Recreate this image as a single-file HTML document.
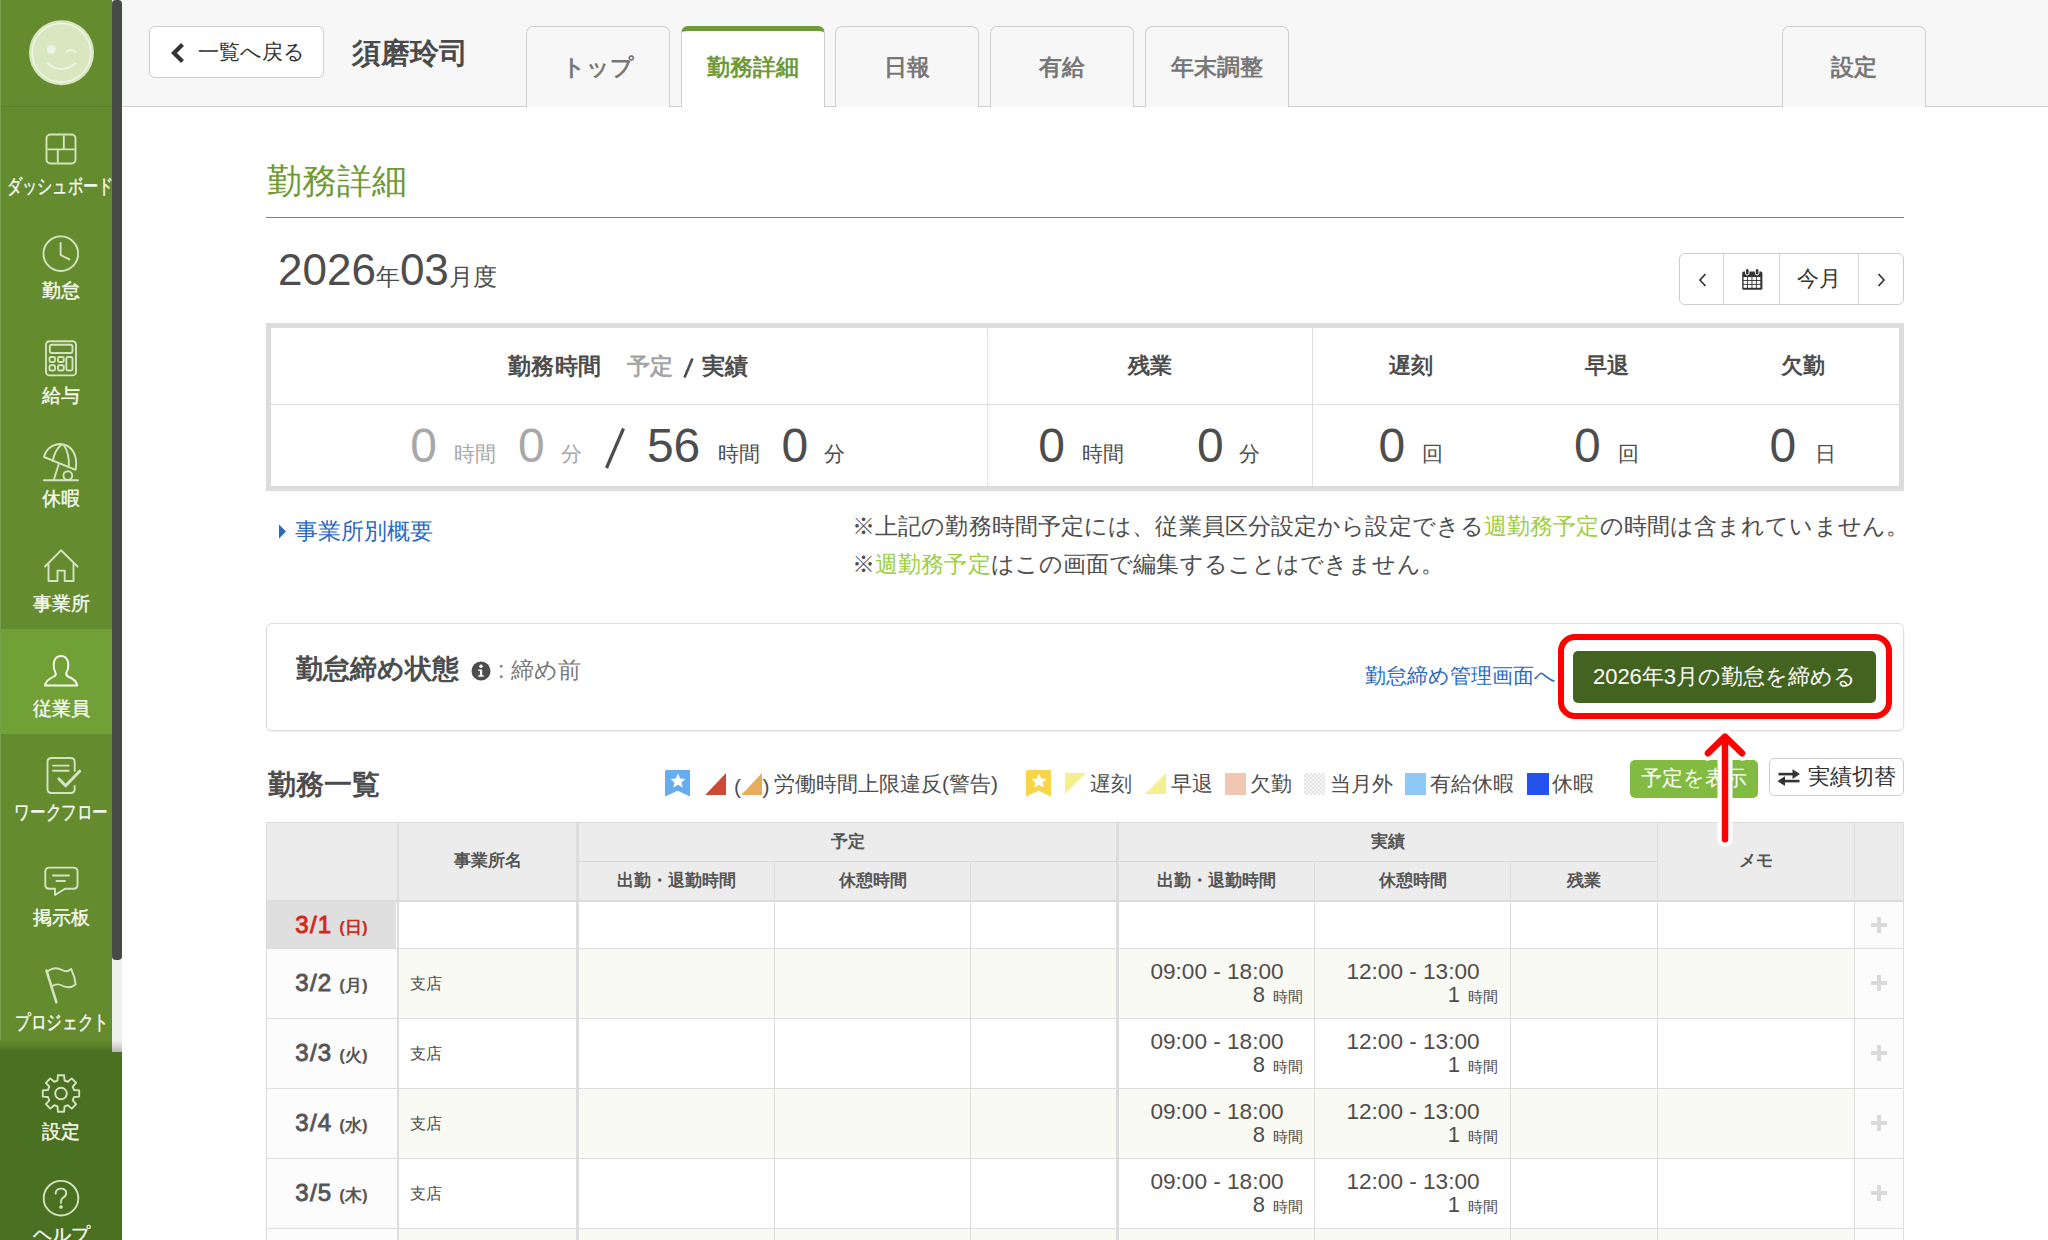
<!DOCTYPE html>
<html lang="ja">
<head>
<meta charset="utf-8">
<style>
*{box-sizing:border-box;margin:0;padding:0}
html,body{width:2048px;height:1240px;overflow:hidden;background:#fff}
body{position:relative;font-family:"Liberation Sans",sans-serif;color:#4d4d4d}
.a{position:absolute}
/* sidebar */
#sb{position:absolute;left:0;top:0;width:122px;height:1240px;background:#648c2e;overflow:hidden}
#sb .logoarea{position:absolute;left:0;top:0;width:112px;height:107px;border-bottom:1px solid #5a8028}
#sb .item{position:absolute;left:0;width:112px;height:105px;color:#fff}
#sb .lbl{position:absolute;left:0;width:122px;text-align:center;font-size:19px;line-height:20px;white-space:nowrap;color:#fbfdf7;-webkit-text-stroke:0.35px #fbfdf7}
#sb .xx{position:absolute;left:0;width:112px;text-align:center;font-size:19px;line-height:20px;white-space:nowrap;color:#fbfdf7}
#sb .item svg{position:absolute;left:0;top:0}
#sb .active{background:#71a036}
#sbtrack{position:absolute;left:112px;top:0;width:10px;height:1052px;background:linear-gradient(#eef0ea 1040px,#d6d6d2 1046px,#b5b5b2 1052px)}
#sbthumb{position:absolute;left:112px;top:0;width:10px;height:960px;background:#474947;border-radius:4px}
#sbbottom{position:absolute;left:0;top:1051px;width:122px;height:189px;background:#4a7121}
#sbshade{position:absolute;left:0;top:1040px;width:112px;height:12px;background:linear-gradient(#648c2e,#5b8129 45%,#4f7424 80%,#456a22)}

#hdr{position:absolute;left:122px;top:0;width:1926px;height:107px;background:#f7f7f7;border-bottom:1px solid #cfcfcf}
.backbtn{position:absolute;left:149px;top:26px;width:175px;height:52px;background:#fff;border:1px solid #cdcdcd;border-radius:6px}
.backbtn span{position:absolute;left:48px;top:13px;font-size:21px;line-height:24px;color:#333;white-space:nowrap}
.pname{position:absolute;left:352px;top:36px;font-size:29px;line-height:34px;font-weight:bold;color:#4a4a4a;white-space:nowrap}
.tab{position:absolute;top:26px;width:144px;height:81px;background:#f7f7f7;border:1px solid #cfcfcf;border-bottom:none;border-radius:7px 7px 0 0;text-align:center;font-size:23px;font-weight:bold;color:#777;line-height:26px;padding-top:27px;white-space:nowrap}
.tab.on{background:#fff;color:#6f9a37;border-top:5px solid #6f9a37;padding-top:23px;height:81px;border-left-color:#cfcfcf}

.ptitle{position:absolute;left:267px;top:159px;font-size:35px;line-height:44px;color:#6f9a37;white-space:nowrap}
.pline{position:absolute;left:266px;top:217px;width:1638px;height:1px;background:#6f9a30}
.month{position:absolute;left:278px;top:246px;white-space:nowrap;color:#4d4d4d;line-height:48px}
.month b{font-weight:normal;font-size:44px}
.month i{font-style:normal;font-size:24px}
.navg{position:absolute;left:1679px;top:253px;width:225px;height:52px;border:1px solid #cdcdcd;border-radius:6px;background:#fff}
.navg .dv{position:absolute;top:0;width:1px;height:50px;background:#d5d5d5}
.sumbox{position:absolute;left:266px;top:323px;width:1638px;height:168px;border:5px solid #dcdcdc;background:#fff}
.sumbox .hd{position:absolute;font-size:22px;font-weight:bold;line-height:26px;color:#4d4d4d;white-space:nowrap;text-align:center}
.num{position:absolute;white-space:nowrap;color:#4d4d4d;line-height:50px}
.num b{font-weight:normal;font-size:48px}
.num i{font-style:normal;font-size:20px;margin-left:6px}

.link{color:#2a69c2}
.lnk1{position:absolute;left:295px;top:517px;font-size:23px;line-height:28px;white-space:nowrap}
.note{position:absolute;left:852px;font-size:23px;letter-spacing:0.11px;line-height:28px;color:#4d4d4d;white-space:nowrap}
.note span{color:#9dcf3e}
.stbox{position:absolute;left:266px;top:623px;width:1638px;height:108px;border:1px solid #dedede;border-radius:6px;background:#fff;box-shadow:0 1px 2px rgba(0,0,0,.08)}
.sttl{position:absolute;left:296px;top:652px;font-size:27.3px;line-height:34px;font-weight:bold;color:#4d4d4d;white-space:nowrap}
.stval{position:absolute;left:498px;top:657px;font-size:23px;line-height:26px;color:#7a7a7a;white-space:nowrap}
.lnk2{position:absolute;left:1365px;top:663px;font-size:21px;line-height:26px;white-space:nowrap}
.closebtn{position:absolute;left:1573px;top:651px;width:303px;height:52px;background:#436320;border-radius:5px;color:#fff;font-size:22px;line-height:52px;text-align:center;white-space:nowrap}
.redbox{position:absolute;left:1558px;top:634px;width:334px;height:85px;border:6px solid #f00;border-radius:17px}

.h2{position:absolute;left:268px;top:768px;font-size:28px;line-height:34px;font-weight:bold;color:#4d4d4d;white-space:nowrap}
.lg{position:absolute;top:771px;font-size:21px;line-height:26px;color:#4d4d4d;white-space:nowrap}
.sq{position:absolute;top:773px;width:21px;height:22px}
.btn-y{position:absolute;left:1630px;top:760px;width:128px;height:38px;background:#82bb42;border-radius:5px;color:#fff;font-size:21px;line-height:36px;text-align:center;white-space:nowrap}
.btn-s{position:absolute;left:1769px;top:758px;width:135px;height:38px;background:#fff;border:1px solid #cdcdcd;border-radius:5px;color:#333;font-size:22px;line-height:36px;white-space:nowrap}
#tbl{position:absolute;left:266px;top:822px;width:1638px;height:420px;overflow:hidden}
#tbl .c{position:absolute;overflow:hidden}
#tbl .th{position:absolute;font-size:17px;font-weight:bold;line-height:20px;color:#555;text-align:center;white-space:nowrap}
#tbl .dt{position:absolute;left:0;width:131px;text-align:center;font-weight:bold;color:#585858;white-space:nowrap}
#tbl .dt b{font-size:24px;letter-spacing:1.2px;font-weight:normal;-webkit-text-stroke:0.9px currentColor}
#tbl .dt i{font-style:normal;font-size:17px;margin-left:7px}
#tbl .shop{position:absolute;left:144px;font-size:16px;line-height:20px;color:#4d4d4d}
#tbl .tm{position:absolute;font-size:22.6px;line-height:24px;color:#4d4d4d;white-space:nowrap;text-align:center}
#tbl .hr{position:absolute;font-size:22px;line-height:24px;color:#4d4d4d;white-space:nowrap;text-align:right}
#tbl .hr i{font-style:normal;font-size:15px;margin-left:8px}
#tbl .plus{position:absolute;left:1604px;width:18px;height:18px}

.dg{position:absolute;font-size:48px;line-height:50px;color:#4d4d4d;white-space:nowrap;top:421px}
.un{position:absolute;font-size:21px;line-height:24px;color:#4d4d4d;white-space:nowrap;top:442px}
.gy{color:#a8a8a8}
</style>
</head>
<body>
<div id="hdr"></div>
<div class="backbtn"><svg class="a" style="left:20px;top:15px" width="16" height="22"><path d="M12.5 2.5L4 11L12.5 19.5" fill="none" stroke="#333" stroke-width="4.2" stroke-linejoin="miter"/></svg><span>一覧へ戻る</span></div>
<div class="pname">須磨玲司</div>
<div class="tab" style="left:526px">トップ</div>
<div class="tab on" style="left:681px">勤務詳細</div>
<div class="tab" style="left:835px">日報</div>
<div class="tab" style="left:990px">有給</div>
<div class="tab" style="left:1145px">年末調整</div>
<div class="tab" style="left:1782px">設定</div>

<div class="ptitle">勤務詳細</div>
<div class="pline"></div>
<div class="month"><b>2026</b><i>年</i><b>03</b><i>月度</i></div>
<div class="navg">
  <div class="dv" style="left:43px"></div><div class="dv" style="left:99px"></div><div class="dv" style="left:178px"></div>
  <svg class="a" style="left:16px;top:17px" width="14" height="18"><path d="M9.5 3L4 9L9.5 15" fill="none" stroke="#333" stroke-width="1.7"/></svg>
  <svg class="a" style="left:61.5px;top:14px" width="22" height="23"><rect x="0.2" y="3.4" width="20.2" height="18.4" rx="1.6" fill="#333"/><g fill="#fff"><rect x="1.6" y="9.0" width="3.5" height="3.0"/><rect x="6.0" y="9.0" width="3.5" height="3.0"/><rect x="10.4" y="9.0" width="3.5" height="3.0"/><rect x="14.8" y="9.0" width="3.5" height="3.0"/><rect x="1.6" y="12.9" width="3.5" height="3.0"/><rect x="6.0" y="12.9" width="3.5" height="3.0"/><rect x="10.4" y="12.9" width="3.5" height="3.0"/><rect x="14.8" y="12.9" width="3.5" height="3.0"/><rect x="1.6" y="16.8" width="3.5" height="3.0"/><rect x="6.0" y="16.8" width="3.5" height="3.0"/><rect x="10.4" y="16.8" width="3.5" height="3.0"/><rect x="14.8" y="16.8" width="3.5" height="3.0"/></g><rect x="3.5" y="0.6" width="3.6" height="6.4" rx="1.8" fill="#333" stroke="#fff" stroke-width="1"/><rect x="13.3" y="0.6" width="3.6" height="6.4" rx="1.8" fill="#333" stroke="#fff" stroke-width="1"/></svg>
  <div class="a" style="left:99px;top:12px;width:79px;text-align:center;font-size:22px;line-height:26px;color:#333">今月</div>
  <svg class="a" style="left:194px;top:17px" width="14" height="18"><path d="M4.5 3L10 9L4.5 15" fill="none" stroke="#333" stroke-width="1.7"/></svg>
</div>
<div class="sumbox">
  <div class="a" style="left:0;top:76px;width:1628px;height:1px;background:#dedede"></div>
  <div class="a" style="left:716px;top:0;width:0;height:158px;border-left:1px dotted #d0d0d0"></div>
  <div class="a" style="left:1041px;top:0;width:1px;height:158px;background:#dedede"></div>
  <div class="hd" style="left:237px;top:25px;font-size:23px;letter-spacing:0.3px">勤務時間</div><div class="hd" style="left:356px;top:25px;font-size:23px;color:#a5a5a5;letter-spacing:0.3px">予定</div><svg class="a" style="left:411px;top:29px" width="14" height="22"><path d="M2.5 20.5L10.5 1.5" stroke="#4d4d4d" stroke-width="2.6"/></svg><div class="hd" style="left:431px;top:25px;font-size:23px;letter-spacing:0.3px">実績</div>
  <div class="hd" style="left:717px;top:25px;width:324px">残業</div>
  <div class="hd" style="left:1042px;top:25px;width:196px">遅刻</div>
  <div class="hd" style="left:1238px;top:25px;width:196px">早退</div>
  <div class="hd" style="left:1434px;top:25px;width:196px">欠勤</div>
</div>


<div class="dg gy" id="v0" style="left:410.2px">0</div>
<div class="un gy" id="v1" style="left:454.0px">時間</div>
<div class="dg gy" id="v2" style="left:517.9px">0</div>
<div class="un gy" id="v3" style="left:560.7px">分</div>
<svg class="a" style="left:600px;top:424px" width="30" height="48"><path d="M6.5 44L23.5 4.5" stroke="#4d4d4d" stroke-width="3.2"/></svg>
<div class="dg" id="v5" style="left:646.9px">56</div>
<div class="un" id="v6" style="left:717.8px">時間</div>
<div class="dg" id="v7" style="left:781.5px">0</div>
<div class="un" id="v8" style="left:824.4px">分</div>
<div class="dg" id="v9" style="left:1038.2px">0</div>
<div class="un" id="v10" style="left:1081.5px">時間</div>
<div class="dg" id="v11" style="left:1196.9px">0</div>
<div class="un" id="v12" style="left:1239.3px">分</div>
<div class="dg" id="v13" style="left:1378.5px">0</div>
<div class="un" id="v14" style="left:1422.0px">回</div>
<div class="dg" id="v15" style="left:1574.0px">0</div>
<div class="un" id="v16" style="left:1617.6px">回</div>
<div class="dg" id="v17" style="left:1769.5px">0</div>
<div class="un" id="v18" style="left:1814.5px">日</div>
<svg class="a" style="left:276px;top:523px" width="12" height="18"><path d="M3 1.5L10 8.5L3 15.5Z" fill="#2a69c2"/></svg>
<div class="lnk1 link">事業所別概要</div>
<div class="note" style="top:512px">※上記の勤務時間予定には、従業員区分設定から設定できる<span>週勤務予定</span>の時間は含まれていません。</div>
<div class="note" style="top:550px">※<span>週勤務予定</span>はこの画面で編集することはできません。</div>
<div class="stbox"></div>
<div class="sttl">勤怠締め状態</div>
<svg class="a" style="left:471px;top:661px" width="20" height="20"><circle cx="10" cy="10" r="9.5" fill="#4d4d4d"/><circle cx="10" cy="5.3" r="1.7" fill="#fff"/><path d="M7.3 8.4H11.2V14.2H12.8V15.8H7.3V14.2H8.9V10H7.3Z" fill="#fff"/></svg>
<div class="stval">: 締め前</div>
<div class="lnk2 link">勤怠締め管理画面へ</div>
<div class="closebtn">2026年3月の勤怠を締める</div>
<div class="redbox"></div>

<div class="h2">勤務一覧</div>
<svg class="a" style="left:664px;top:769px" width="28" height="29"><path d="M2.5 1H25.5Q26 1 26 2V27.6L13.6 21.8L1 27.6V2Q1 1 2.5 1Z" fill="#67abf0"/><path d="M14 4.5L16.2 9.4L21.5 9.9L17.5 13.4L18.7 18.5L14 15.8L9.3 18.5L10.5 13.4L6.5 9.9L11.8 9.4Z" fill="#fff"/></svg>
<svg class="a" style="left:704px;top:772px" width="24" height="24"><path d="M22 1V23H1.2Z" fill="#cc4a35"/></svg>
<div class="lg" style="left:734px;top:774px">(</div>
<svg class="a" style="left:740px;top:772px" width="24" height="24"><path d="M22 1V23H1.2Z" fill="#e6ae5c"/></svg>
<div class="lg" style="left:762.5px;top:774px">)</div>
<div class="lg" style="left:774px">労働時間上限違反(警告)</div>
<svg class="a" style="left:1025px;top:769px" width="28" height="29"><path d="M2.5 1H25.5Q26 1 26 2V27.6L13.6 21.8L1 27.6V2Q1 1 2.5 1Z" fill="#f8d448"/><path d="M14 4.5L16.2 9.4L21.5 9.9L17.5 13.4L18.7 18.5L14 15.8L9.3 18.5L10.5 13.4L6.5 9.9L11.8 9.4Z" fill="#fff"/></svg>
<svg class="a" style="left:1064px;top:772px" width="24" height="24"><path d="M1 1H22L1 22Z" fill="#f6ef90"/></svg>
<div class="lg" style="left:1090px">遅刻</div>
<svg class="a" style="left:1144px;top:772px" width="24" height="24"><path d="M22 1V22H1Z" fill="#f6ef90"/></svg>
<div class="lg" style="left:1171px">早退</div>
<div class="sq" style="left:1225px;background:#f1c6b2"></div>
<div class="lg" style="left:1250px">欠勤</div>
<div class="sq" style="left:1304px;background-color:#f4f4f4;background-image:repeating-conic-gradient(#e4e4e4 0 25%,#f7f7f7 0 50%);background-size:4px 4px"></div>
<div class="lg" style="left:1330px">当月外</div>
<div class="sq" style="left:1405px;background:#8ec8f6"></div>
<div class="lg" style="left:1430px">有給休暇</div>
<div class="sq" style="left:1527px;width:22px;background:#2551ec"></div>
<div class="lg" style="left:1552px">休暇</div>
<div class="btn-y">予定を表示</div>
<div class="btn-s"><svg class="a" style="left:-1px;top:-1px" width="40" height="38"><g fill="#333"><path d="M9.5 14.8H25V17.4H9.5Z"/><path d="M23.5 11.2L31 16.1L23.5 21Z"/><path d="M14.5 21.8H30.5V24.4H14.5Z"/><path d="M16 18.2L8.5 23.1L16 28Z"/></g></svg><span class="a" style="left:38px;top:0">実績切替</span></div>
<div id="tbl">
  <!-- header bg -->
  <div class="c" style="left:0;top:0;width:1638px;height:78px;background:#ececec"></div>
  <div class="c" style="left:0;top:78px;width:1638px;height:3px;background:#dcdcdc"></div>
  <div class="c" style="left:0;top:80px;width:130px;height:46px;background:#dfdfdf"></div>
  <div class="c" style="left:133px;top:80px;width:1455px;height:46px;background:#fff"></div>
  <div class="c" style="left:1589px;top:80px;width:48px;height:46px;background:#fcfcfc"></div>
  <div class="c" style="left:0;top:126px;width:1638px;height:1px;background:#dedede"></div>
  <div class="dt" style="top:88px;line-height:30px;color:#d0281c"><b>3/1</b><i>(日)</i></div>
  <svg class="plus" style="top:94px" viewBox="0 0 18 18"><path d="M9 1V17M1 9H17" stroke="#dadada" stroke-width="4"/></svg>
  <div class="c" style="left:0;top:127px;width:130px;height:69px;background:#fcfcfc"></div>
  <div class="c" style="left:133px;top:127px;width:1455px;height:69px;background:#f9faf3"></div>
  <div class="c" style="left:1589px;top:127px;width:48px;height:69px;background:#fcfcfc"></div>
  <div class="c" style="left:0;top:196px;width:1638px;height:1px;background:#dedede"></div>
  <div class="dt" style="top:146px;line-height:30px;color:#555"><b>3/2</b><i>(月)</i></div>
  <svg class="plus" style="top:152px" viewBox="0 0 18 18"><path d="M9 1V17M1 9H17" stroke="#dadada" stroke-width="4"/></svg>
  <div class="shop" style="top:152px">支店</div>
  <div class="tm" style="left:853px;top:138px;width:196px">09:00 - 18:00</div>
  <div class="hr" style="left:853px;top:161px;width:184px">8<i>時間</i></div>
  <div class="tm" style="left:1049px;top:138px;width:196px">12:00 - 13:00</div>
  <div class="hr" style="left:1049px;top:161px;width:183px">1<i>時間</i></div>
  <div class="c" style="left:0;top:197px;width:130px;height:69px;background:#fcfcfc"></div>
  <div class="c" style="left:133px;top:197px;width:1455px;height:69px;background:#fff"></div>
  <div class="c" style="left:1589px;top:197px;width:48px;height:69px;background:#fcfcfc"></div>
  <div class="c" style="left:0;top:266px;width:1638px;height:1px;background:#dedede"></div>
  <div class="dt" style="top:216px;line-height:30px;color:#555"><b>3/3</b><i>(火)</i></div>
  <svg class="plus" style="top:222px" viewBox="0 0 18 18"><path d="M9 1V17M1 9H17" stroke="#dadada" stroke-width="4"/></svg>
  <div class="shop" style="top:222px">支店</div>
  <div class="tm" style="left:853px;top:208px;width:196px">09:00 - 18:00</div>
  <div class="hr" style="left:853px;top:231px;width:184px">8<i>時間</i></div>
  <div class="tm" style="left:1049px;top:208px;width:196px">12:00 - 13:00</div>
  <div class="hr" style="left:1049px;top:231px;width:183px">1<i>時間</i></div>
  <div class="c" style="left:0;top:267px;width:130px;height:69px;background:#fcfcfc"></div>
  <div class="c" style="left:133px;top:267px;width:1455px;height:69px;background:#f9faf3"></div>
  <div class="c" style="left:1589px;top:267px;width:48px;height:69px;background:#fcfcfc"></div>
  <div class="c" style="left:0;top:336px;width:1638px;height:1px;background:#dedede"></div>
  <div class="dt" style="top:286px;line-height:30px;color:#555"><b>3/4</b><i>(水)</i></div>
  <svg class="plus" style="top:292px" viewBox="0 0 18 18"><path d="M9 1V17M1 9H17" stroke="#dadada" stroke-width="4"/></svg>
  <div class="shop" style="top:292px">支店</div>
  <div class="tm" style="left:853px;top:278px;width:196px">09:00 - 18:00</div>
  <div class="hr" style="left:853px;top:301px;width:184px">8<i>時間</i></div>
  <div class="tm" style="left:1049px;top:278px;width:196px">12:00 - 13:00</div>
  <div class="hr" style="left:1049px;top:301px;width:183px">1<i>時間</i></div>
  <div class="c" style="left:0;top:337px;width:130px;height:69px;background:#fcfcfc"></div>
  <div class="c" style="left:133px;top:337px;width:1455px;height:69px;background:#fff"></div>
  <div class="c" style="left:1589px;top:337px;width:48px;height:69px;background:#fcfcfc"></div>
  <div class="c" style="left:0;top:406px;width:1638px;height:1px;background:#dedede"></div>
  <div class="dt" style="top:356px;line-height:30px;color:#555"><b>3/5</b><i>(木)</i></div>
  <svg class="plus" style="top:362px" viewBox="0 0 18 18"><path d="M9 1V17M1 9H17" stroke="#dadada" stroke-width="4"/></svg>
  <div class="shop" style="top:362px">支店</div>
  <div class="tm" style="left:853px;top:348px;width:196px">09:00 - 18:00</div>
  <div class="hr" style="left:853px;top:371px;width:184px">8<i>時間</i></div>
  <div class="tm" style="left:1049px;top:348px;width:196px">12:00 - 13:00</div>
  <div class="hr" style="left:1049px;top:371px;width:183px">1<i>時間</i></div>
  <div class="c" style="left:0;top:407px;width:130px;height:69px;background:#fcfcfc"></div>
  <div class="c" style="left:133px;top:407px;width:1455px;height:69px;background:#f9faf3"></div>
  <div class="c" style="left:1589px;top:407px;width:48px;height:69px;background:#fcfcfc"></div>
  <div class="c" style="left:0;top:476px;width:1638px;height:1px;background:#dedede"></div>
  <div class="dt" style="top:426px;line-height:30px;color:#555"><b>3/6</b><i>(金)</i></div>
  <svg class="plus" style="top:432px" viewBox="0 0 18 18"><path d="M9 1V17M1 9H17" stroke="#dadada" stroke-width="4"/></svg>
  <div class="shop" style="top:432px">支店</div>
  <div class="tm" style="left:853px;top:418px;width:196px">09:00 - 18:00</div>
  <div class="hr" style="left:853px;top:441px;width:184px">8<i>時間</i></div>
  <div class="tm" style="left:1049px;top:418px;width:196px">12:00 - 13:00</div>
  <div class="hr" style="left:1049px;top:441px;width:183px">1<i>時間</i></div>
  <div class="c" style="left:0;top:0;width:1px;height:420px;background:#dcdcdc"></div>
  <div class="c" style="left:0;top:0;width:1638px;height:1px;background:#dcdcdc"></div>
  <!-- header lines -->
  <div class="c" style="left:131px;top:0;width:2px;height:420px;background:#dcdcdc"></div>
  <div class="c" style="left:310px;top:0;width:3px;height:420px;background:#dcdcdc"></div>
  <div class="c" style="left:850px;top:0;width:3px;height:420px;background:#dcdcdc"></div>
  <div class="c" style="left:313px;top:39px;width:1078px;height:1px;background:#d8d8d8"></div>
  <div class="c" style="left:508px;top:39px;width:1px;height:381px;background:#dedede"></div>
  <div class="c" style="left:704px;top:39px;width:1px;height:381px;background:#dedede"></div>
  <div class="c" style="left:1048px;top:39px;width:1px;height:381px;background:#dedede"></div>
  <div class="c" style="left:1244px;top:39px;width:1px;height:381px;background:#dedede"></div>
  <div class="c" style="left:1391px;top:0;width:1px;height:420px;background:#dedede"></div>
  <div class="c" style="left:1588px;top:0;width:1px;height:420px;background:#dedede"></div>
  <div class="c" style="left:1637px;top:0;width:1px;height:420px;background:#dedede"></div>
  <div class="th" style="left:313px;top:10px;width:537px">予定</div>
  <div class="th" style="left:853px;top:10px;width:538px">実績</div>
  <div class="th" style="left:133px;top:29px;width:177px">事業所名</div>
  <div class="th" style="left:1391px;top:29px;width:197px">メモ</div>
  <div class="th" style="left:313px;top:49px;width:195px">出勤・退勤時間</div>
  <div class="th" style="left:509px;top:49px;width:195px">休憩時間</div>
  <div class="th" style="left:853px;top:49px;width:195px">出勤・退勤時間</div>
  <div class="th" style="left:1049px;top:49px;width:195px">休憩時間</div>
  <div class="th" style="left:1245px;top:49px;width:146px">残業</div>
</div>
<svg class="a" style="left:1690px;top:715px;z-index:10" width="70" height="140"><g transform="translate(-1690 -715)" fill="none" stroke-linecap="round" stroke-linejoin="round"><path d="M1725 839.2V738M1708 753.2L1725 736.6L1742 753.2" stroke="#fff" stroke-width="15"/><path d="M1725 839.2V738M1708 753.2L1725 736.6L1742 753.2" stroke="#f00" stroke-width="6.5"/></g></svg>
<div id="sb">
  <div class="a" style="left:0;top:106px;width:112px;height:1px;background:#5b8129"></div>
  <div class="a active" style="left:0;top:629px;width:112px;height:105px;background:#71a036"></div>
  <div id="sbshade"></div>
  <div class="a" style="left:0;top:0;width:1px;height:1040px;background:#77a04a"></div>
  <div id="sbbottom"></div>
  <svg width="122" height="1240" class="a" style="left:0;top:0" fill="none" stroke="#d5e3c1" stroke-width="1.9" stroke-linecap="round" stroke-linejoin="round">
    <!-- avatar -->
    <circle cx="61.5" cy="52.8" r="32.5" fill="#d9e7c0" stroke="none"/>
    <circle cx="61.5" cy="52.8" r="29.3" stroke="#eef3e4" stroke-width="1.6"/>
    <circle cx="51.3" cy="49.3" r="4.4" fill="#eef3e4" stroke="none"/>
    <path d="M66.5 52 Q71 48 75.5 52" stroke="#eef3e4" stroke-width="1.7"/>
    <path d="M47.5 63.5 Q61.5 74.5 75.5 63.5" stroke="#eef3e4" stroke-width="1.9"/>
    <!-- dashboard -->
    <rect x="46.5" y="134.5" width="29" height="29" rx="4"/>
    <path stroke-linecap="butt" d="M47.4 149.4H74.6M63.8 135.4V149.4M57.8 149.4V162.6"/>
    <!-- clock -->
    <circle cx="60.8" cy="253.7" r="17.3"/>
    <path d="M60.6 243V255L69.4 259.4"/>
    <!-- calculator -->
    <rect x="46" y="341.2" width="30" height="34.2" rx="3.5"/>
    <rect x="49.8" y="344.8" width="22.7" height="8.2" rx="2"/>
    <rect x="49.5" y="357" width="5.5" height="5" rx="1.2"/>
    <rect x="58" y="357" width="5.7" height="5" rx="1.2"/>
    <rect x="49.5" y="365.3" width="5.5" height="5.2" rx="1.2"/>
    <rect x="58" y="365.3" width="5.7" height="5.2" rx="1.2"/>
    <rect x="66.3" y="357" width="6.2" height="13.5" rx="1.5"/>
    <!-- umbrella -->
    <path d="M44 457C46.5 446.5 57 441.5 66.5 445.5C74.5 449 77.5 459 75.6 469.8Z"/>
    <path d="M61.5 444.5Q54.5 450.5 52.8 460.8M63.5 444.8Q69.5 453 68.8 466"/>
    <path d="M58.8 463.8L53.8 480"/>
    <circle cx="67.8" cy="475.6" r="4.4"/>
    <path d="M43.8 480.2H78"/>
    <!-- house -->
    <path d="M45 566.5L61 550.3L77.5 566.5M48.5 563.3V581H57.5V570.6H64.7V581H73.5V563.3"/>
    <!-- person (active) -->
    <path stroke="#fbfdf7" d="M55.5 672.5Q53 668 54 662Q55.5 656 61 656Q66.5 656 68 662Q69 668 66.5 672.5Q65.5 675 68 676.5Q76.5 680 77.3 685.5H45Q45.8 680 54 676.5Q56.5 675 55.5 672.5Z"/>
    <!-- workflow -->
    <path d="M74.7 770.7V762Q74.7 758 70.7 758H51.5Q47.5 758 47.5 762V789Q47.5 793 51.5 793H70.7Q74.7 793 74.7 789V786"/>
    <path d="M53 765.6H68.7M53 770.7H68.7"/>
    <path d="M58.8 778.8L65.6 785.8L79.6 771.2" stroke-width="3"/>
    <!-- chat -->
    <path d="M49.5 867.6H73.5Q77.5 867.6 77.5 871.6V884.8Q77.5 888.8 73.5 888.8H65L55 895V888.8H49.3Q45.3 888.8 45.3 884.8V871.6Q45.3 867.6 49.3 867.6Z"/>
    <path d="M53 875.5H69M56.5 881H65"/>
    <!-- flag -->
    <path d="M46.5 970.6L56.4 1002.3" stroke-width="2.6"/>
    <path d="M47.8 971Q55 966 62 970Q67 973 71.2 968.8Q75 977 75.6 984.4Q70 989 63 986Q58 983 53 985.6"/>
    <!-- gear -->
    <path d="M57.5 1080.5 L57.9 1075.3 L64.1 1075.3 L64.5 1080.5 L67.8 1081.8 L71.7 1078.4 L76.1 1082.8 L72.7 1086.7 L74.0 1090.0 L79.2 1090.4 L79.2 1096.6 L74.0 1097.0 L72.7 1100.3 L76.1 1104.2 L71.7 1108.6 L67.8 1105.2 L64.5 1106.5 L64.1 1111.7 L57.9 1111.7 L57.5 1106.5 L54.2 1105.2 L50.3 1108.6 L45.9 1104.2 L49.3 1100.3 L48.0 1097.0 L42.8 1096.6 L42.8 1090.4 L48.0 1090.0 L49.3 1086.7 L45.9 1082.8 L50.3 1078.4 L54.2 1081.8Z"/>
    <circle cx="61" cy="1093.5" r="5.8"/>
    <!-- help -->
    <circle cx="61" cy="1198.2" r="17.3"/>
    <path d="M55.6 1193.6Q55.9 1188.6 61 1188.6Q66.2 1188.6 66.2 1193.2Q66.2 1196 63 1197.8Q61 1199 61 1201.6V1203"/>
    <circle cx="61" cy="1207" r="0.9" fill="#d5e3c1"/>
  </svg>
  <div class="lbl" style="top:176px;transform:scaleX(0.76);transform-origin:28px 0;font-size:20px">ダッシュボード</div>
  <div class="lbl" style="top:281px">勤怠</div>
  <div class="lbl" style="top:386px">給与</div>
  <div class="lbl" style="top:489px">休暇</div>
  <div class="lbl" style="top:594px">事業所</div>
  <div class="lbl" style="top:699px;color:#fff">従業員</div>
  <div class="lbl" style="top:802px;transform:scaleX(0.778);transform-origin:61.5px 0;font-size:20px">ワークフロー</div>
  <div class="lbl" style="top:908px">掲示板</div>
  <div class="lbl" style="top:1012px;left:1px;transform:scaleX(0.782);transform-origin:61px 0;font-size:20px">プロジェクト</div>
  <div class="lbl" style="top:1122px">設定</div>
  <div class="lbl" style="top:1225px">ヘルプ</div>
</div>
<div id="sbtrack"></div>
<div id="sbthumb"></div>
</body>
</html>
